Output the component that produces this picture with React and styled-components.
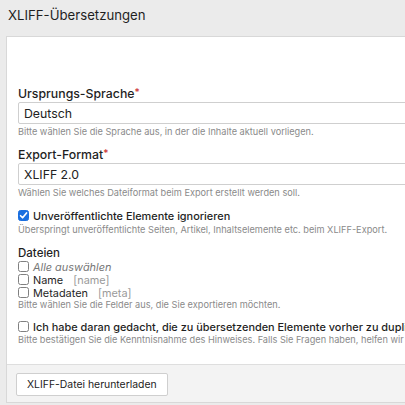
import React from "react";
import styled, { createGlobalStyle } from "styled-components";

const Global = createGlobalStyle`
  html, body { margin: 0; padding: 0; background: #ebebeb; overflow: hidden; }
  body { font-family: Inter, "Liberation Sans", Arial, sans-serif; color: #222; }
`;

const Page = styled.div`
  width: 405px;
  height: 405px;
  overflow: hidden;
`;

const Title = styled.h1`
  margin: 0;
  padding: 6px 8px 0 8px;
  height: 36px;
  box-sizing: border-box;
  font-size: 13.2px;
  line-height: 18px;
  font-weight: normal;
  color: #1f1f1f;
`;

const Panel = styled.div`
  margin-left: 6px;
  width: 560px;
  background: #fff;
  border: 1px solid #d8d8d8;
  border-right: none;
`;

const Body = styled.div`
  padding: 50px 12px 18px 11px;
  display: flex;
  flex-direction: column;
`;

const Field = styled.div`
  display: flex;
  flex-direction: column;
  margin-bottom: ${(p) => p.$mb ?? 10}px;
`;

const Label = styled.label`
  font-size: ${(p) => p.$size ?? 12.3}px;
  font-weight: 500;
  color: #1f1f1f;
  line-height: ${(p) => p.$lh ?? 14}px;
  margin-bottom: ${(p) => p.$mb ?? 1}px;
  white-space: nowrap;
`;

const Star = styled.span`
  color: #c33;
  font-size: 10px;
  vertical-align: top;
  line-height: 10px;
`;

const Select = styled.div`
  height: 20px;
  border: 1px solid #cfcfcf;
  border-radius: 2px;
  font-size: 12.3px;
  color: #222;
  display: flex;
  align-items: center;
  padding-left: 5px;
`;

const Help = styled.div`
  font-size: 9.2px;
  color: #8a8a8a;
  line-height: ${(p) => p.$lh ?? 13}px;
  margin-top: ${(p) => p.$mt ?? 1}px;
  white-space: nowrap;
`;

const CheckRow = styled.div`
  display: flex;
  align-items: center;
  gap: 4px;
  height: 13px;
  font-size: 10.9px;
  font-weight: ${(p) => (p.$bold ? 500 : 400)};
  white-space: nowrap;
  color: #1f1f1f;
`;

const Box = styled.span`
  width: 11px;
  height: 11px;
  flex: none;
  border-radius: 2.5px;
  box-sizing: border-box;
  border: 1px solid ${(p) => (p.$on ? "#1a6fe0" : "#808080")};
  background: ${(p) => (p.$on ? "#1a6fe0" : "#fff")};
  display: inline-flex;
  align-items: center;
  justify-content: center;
`;

const Italic = styled.span`
  font-style: italic;
  color: #777;
`;

const Key = styled.span`
  color: #9a9a9a;
  margin-left: 6px;
`;

const Footer = styled.div`
  border-top: 1px solid #dedede;
  background: #f3f3f3;
  padding: 8px 9px 6px;
`;

const Button = styled.button`
  display: block;
  height: 23px;
  padding: 0 10px;
  background: #fff;
  border: 1px solid #cfcfcf;
  border-radius: 2px;
  font-family: Inter, "Liberation Sans", Arial, sans-serif;
  font-size: 10.4px;
  color: #222;
`;

const Check = ({ on }) => (
  <Box $on={on}>
    {on && (
      <svg width="9" height="9" viewBox="0 0 8 8">
        <path d="M1.4 4.2 L3.2 6 L6.7 1.7" fill="none" stroke="#fff" strokeWidth="1.5" strokeLinecap="round" strokeLinejoin="round" />
      </svg>
    )}
  </Box>
);

export default function App() {
  return (
    <Page>
      <Global />
      <Title>XLIFF-Übersetzungen</Title>
      <Panel>
        <Body>
          <Field>
            <Label>Ursprungs-Sprache<Star>*</Star></Label>
            <Select>Deutsch</Select>
            <Help>Bitte wählen Sie die Sprache aus, in der die Inhalte aktuell vorliegen.</Help>
          </Field>
          <Field>
            <Label>Export-Format<Star>*</Star></Label>
            <Select>XLIFF 2.0</Select>
            <Help>Wählen Sie welches Dateiformat beim Export erstellt werden soll.</Help>
          </Field>
          <Field $mb={11}>
            <CheckRow $bold>
              <Check on />
              Unveröffentlichte Elemente ignorieren
            </CheckRow>
            <Help>Überspringt unveröffentlichte Seiten, Artikel, Inhaltselemente etc. beim XLIFF-Export.</Help>
          </Field>
          <Field $mb={10}>
            <Label $size={11.5} $lh={13} $mb={0}>Dateien</Label>
            <CheckRow>
              <Check />
              <Italic>Alle auswählen</Italic>
            </CheckRow>
            <CheckRow>
              <Check />
              Name<Key>[name]</Key>
            </CheckRow>
            <CheckRow>
              <Check />
              Metadaten<Key>[meta]</Key>
            </CheckRow>
            <Help $mt={0} $lh={11}>Bitte wählen Sie die Felder aus, die Sie exportieren möchten.</Help>
          </Field>
          <Field $mb={0}>
            <CheckRow $bold>
              <Check />
              Ich habe daran gedacht, die zu übersetzenden Elemente vorher zu duplizieren.
            </CheckRow>
            <Help $mt={0}>Bitte bestätigen Sie die Kenntnisnahme des Hinweises. Falls Sie Fragen haben, helfen wir Ihnen gerne.</Help>
          </Field>
        </Body>
        <Footer>
          <Button>XLIFF-Datei herunterladen</Button>
        </Footer>
      </Panel>
    </Page>
  );
}
